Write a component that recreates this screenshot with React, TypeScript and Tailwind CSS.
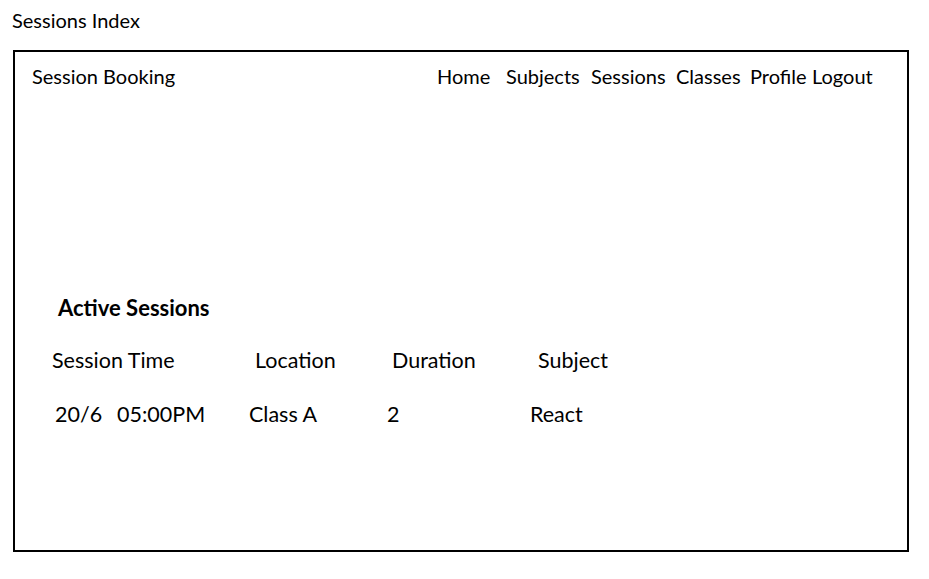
const navItems = [
  { label: "Home", width: "w-[69px]" },
  { label: "Subjects", width: "w-[85px]" },
  { label: "Sessions", width: "w-[85px]" },
  { label: "Classes", width: "w-[74px]" },
  { label: "Profile", width: "w-[62px]" },
  { label: "Logout", width: "" },
];

export default function App() {
  return (
    <div className="w-[929px] h-[579px] bg-white text-black pl-[12px] pt-[8px] font-['Lato','Open_Sans',sans-serif]">
      <div className="text-[20px] leading-[24px]">Sessions Index</div>

      {/* Wireframe box */}
      <div className="mt-[18px] ml-[1px] w-[896px] h-[502px] border-2 border-black">
        {/* Header */}
        <div className="flex pt-[12px] pl-[17px] text-[20px] leading-[24px]">
          <div className="w-[405px]">Session Booking</div>
          <nav className="flex">
            {navItems.map((item) => (
              <span key={item.label} className={item.width}>
                {item.label}
              </span>
            ))}
          </nav>
        </div>

        {/* Active sessions */}
        <h2 className="mt-[208px] pl-[43px] text-[22px] leading-[24px] font-bold">
          Active Sessions
        </h2>

        <div className="mt-[28px] pl-[37px] flex text-[21.5px] leading-[24px]">
          <span className="w-[203px]">Session Time</span>
          <span className="w-[137px]">Location</span>
          <span className="w-[146px]">Duration</span>
          <span>Subject</span>
        </div>

        <div className="mt-[30px] pl-[40px] flex text-[21.5px] leading-[24px]">
          <span className="w-[62px]">20/6</span>
          <span className="w-[132px]">05:00PM</span>
          <span className="w-[138px]">Class A</span>
          <span className="w-[143px]">2</span>
          <span>React</span>
        </div>
      </div>
    </div>
  );
}
